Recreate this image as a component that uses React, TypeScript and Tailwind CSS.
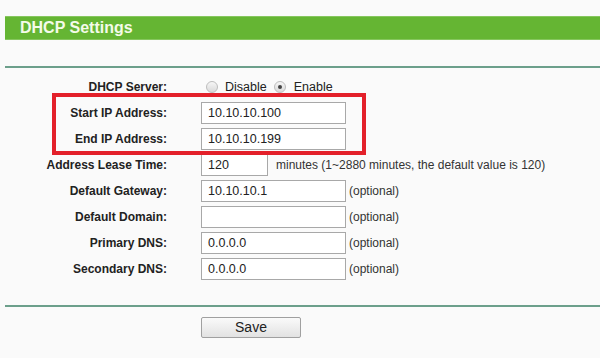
import React from "react";

const font = { fontFamily: '"Liberation Sans", Arial, sans-serif' };

function Radio({ checked }: { checked?: boolean }) {
  return (
    <span className="inline-flex h-[12px] w-[12px] items-center justify-center rounded-full border border-[#bdbdbd] bg-gradient-to-b from-[#f6f6f6] to-[#d9d9d9]">
      {checked ? <span className="h-[4px] w-[4px] rounded-full bg-[#444]" /> : null}
    </span>
  );
}

function Field({ value, w = "w-[145px]" }: { value: string; w?: string }) {
  return (
    <div
      className={`${w} flex h-[22px] items-center border border-[#a8a8a8] bg-white pl-[6px] text-[12.5px] text-[#222]`}
    >
      {value}
    </div>
  );
}

function Row({ label, children }: { label: string; children: React.ReactNode }) {
  return (
    <div className="flex h-[26px] items-center">
      <div className="w-[168px] pr-[1px] text-right text-[12px] font-bold text-[#222]">{label}</div>
      <div className="flex items-center pl-[33px]">{children}</div>
    </div>
  );
}

const Opt = () => <span className="ml-[3px] text-[12px] text-[#333]">(optional)</span>;

export default function App() {
  return (
    <div style={font} className="relative h-[358px] w-[600px] overflow-hidden bg-[#fafafa]">
      <div className="pt-[16px] pl-[5px]">
        <div className="flex h-[24px] items-center border-t border-b border-[#86c65e] bg-[#65b533] pl-[15px] text-[16px] font-bold text-[#f4fbe9]">
          DHCP Settings
        </div>
      </div>
      <div className="mt-[26px] ml-[5px] h-[2px] bg-[#6c9f8b]" />
      <div className="mt-[6px]">
        <Row label="DHCP Server:">
          <div className="flex items-center pl-[5px] text-[12.5px] text-[#222]">
            <Radio />
            <span className="ml-[7px]">Disable</span>
            <span className="ml-[7px] flex items-center">
              <Radio checked />
            </span>
            <span className="ml-[8px]">Enable</span>
          </div>
        </Row>
        <Row label="Start IP Address:">
          <Field value="10.10.10.100" />
        </Row>
        <Row label="End IP Address:">
          <Field value="10.10.10.199" />
        </Row>
        <Row label="Address Lease Time:">
          <Field value="120" w="w-[67px]" />
          <span className="ml-[8px] text-[12px] text-[#333]">
            minutes (1~2880 minutes, the default value is 120)
          </span>
        </Row>
        <Row label="Default Gateway:">
          <Field value="10.10.10.1" />
          <Opt />
        </Row>
        <Row label="Default Domain:">
          <Field value="" />
          <Opt />
        </Row>
        <Row label="Primary DNS:">
          <Field value="0.0.0.0" />
          <Opt />
        </Row>
        <Row label="Secondary DNS:">
          <Field value="0.0.0.0" />
          <Opt />
        </Row>
      </div>
      <div className="mt-[23px] ml-[5px] h-[2px] bg-[#6c9f8b]" />
      <div className="mt-[10px] pl-[201px]">
        <button
          className="flex h-[21px] w-[100px] items-center justify-center rounded-[2px] border border-[#a0a0a0] bg-gradient-to-b from-[#fafafa] to-[#e2e2e2] text-[14px] text-[#222]"
          style={font}
        >
          Save
        </button>
      </div>
      <div className="pointer-events-none absolute left-[52px] top-[93px] h-[62px] w-[314px] border-[4px] border-[#e3202a]" />
    </div>
  );
}
